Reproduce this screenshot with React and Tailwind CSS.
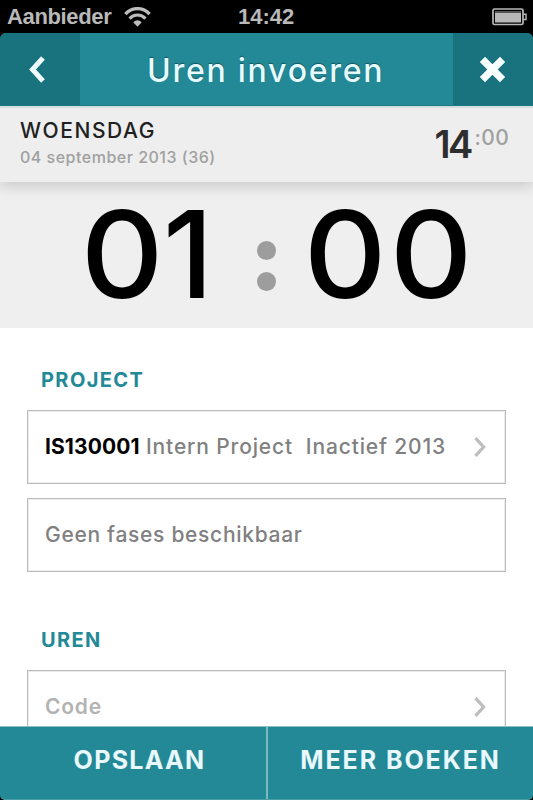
const StatusBar = () => (
  <div className="relative flex h-[33px] items-center justify-between bg-black pl-[7px] pr-[6px] font-['Liberation_Sans',sans-serif] text-[22px] font-bold leading-[33px] text-[#b9b9b9]">
    <div className="flex items-center gap-[13px]">
      <span className="tracking-[-0.35px]">Aanbieder</span>
      <svg width="27" height="20" viewBox="0 0 27 20" fill="none" stroke="#bdbdbd">
        <path d="M1.4 7.2C8 -0.2 19 -0.2 25.6 7.2" strokeWidth="3.4" />
        <path d="M5.6 11.6C10 6.8 17 6.8 21.4 11.6" strokeWidth="3.2" />
        <path d="M9.4 15.4C11.6 12.6 15.4 12.6 17.6 15.4L13.5 19.8Z" fill="#bdbdbd" stroke="none" />
      </svg>
    </div>
    <span className="absolute left-[238px]">14:42</span>
    <svg width="35" height="18" viewBox="0 0 35 18" fill="none">
      <rect x="1" y="1" width="30" height="15.5" rx="1.5" stroke="#b9b9b9" strokeWidth="1.7" />
      <rect x="3" y="3" width="26" height="11.5" fill="#b9b9b9" />
      <rect x="3" y="3" width="26" height="2" fill="#555" />
      <path d="M31.5 6.2H34V11.5H31.5" stroke="#b9b9b9" strokeWidth="1.4" />
    </svg>
  </div>
);

const Header = () => (
  <div className="bg-black">
    <header className="relative z-20 flex h-[73px] overflow-hidden rounded-t-[6px] border-b border-[#1c7782] bg-[#238997] text-[#e6fbff]">
      <button className="flex w-20 items-center bg-[#18737f] pl-[28px]">
        <svg width="18" height="27" viewBox="0 0 18 27" fill="none" stroke="#f0fdff" strokeWidth="5">
          <path d="M15 2L4.5 13.5L15 25" />
        </svg>
      </button>
      <h1 className="flex-1 whitespace-nowrap pl-[67px] text-[32px] font-medium leading-[76px] tracking-[1.75px] [text-shadow:0_-1px_1px_#14555e]">
        Uren invoeren
      </h1>
      <button className="flex w-20 items-center bg-[#18737f] pl-[26px]">
        <svg width="27" height="27" viewBox="0 0 27 27" fill="none" stroke="#f7ffff" strokeWidth="7.4">
          <path d="M3.4 3.4L23.6 23.6M23.6 3.4L3.4 23.6" />
        </svg>
      </button>
    </header>
  </div>
);

const DateRow = () => (
  <div className="relative z-10 flex h-[76px] justify-between border-t-2 border-[#d5dfe0] bg-[#eeeeee] pl-[20px] pr-[24px] shadow-[0_4px_14px_rgba(0,0,0,0.17)]">
    <div className="whitespace-nowrap">
      <div className="mt-[10px] text-[21px] font-medium leading-[26px] tracking-[1.6px] text-[#202020]">WOENSDAG</div>
      <div className="text-[16px] font-medium leading-[26px] tracking-[0.5px] text-[#a0a0a0]">04 september 2013 (36)</div>
    </div>
    <div className="flex items-start">
      <span className="mt-[16px] text-[38px] font-semibold leading-[40px] tracking-[-2.6px] text-[#2e2e2e]">14</span>
      <span className="mt-[17px] pl-[4px] text-[21px] font-medium leading-[26px] tracking-[0.3px] text-[#a0a0a0]">:00</span>
    </div>
  </div>
);

const Clock = () => (
  <div className="flex h-[146px] bg-[#efefef] pl-[81px] text-[121px] font-medium leading-[145px] text-black">
    <span className="flex w-[176px]">
      <span className="w-[82px] shrink-0 text-center"><span className="inline-block scale-x-[1.06]">0</span></span>
      <span className="w-[48px]">1</span>
    </span>
    <span className="flex w-[19px] flex-col items-center gap-[12px] pt-[59px]">
      <span className="size-[19px] rounded-full bg-[#9d9d9d]" />
      <span className="size-[19px] rounded-full bg-[#9d9d9d]" />
    </span>
    <span className="flex pl-[27px]">
      <span className="w-[85px] shrink-0 text-center"><span className="inline-block scale-x-[1.06]">0</span></span>
      <span className="w-[87px] shrink-0 text-center"><span className="inline-block scale-x-[1.06]">0</span></span>
    </span>
  </div>
);

const Chevron = () => (
  <svg width="12" height="20" viewBox="0 0 12 20" fill="none" stroke="#bdbdbd" strokeWidth="3.2">
    <path d="M1.5 1.2L9.6 10L1.5 18.8" />
  </svg>
);

const Field = ({ children, arrow }) => (
  <div className="flex h-[74px] shrink-0 items-center justify-between whitespace-pre border border-[#bbbbbb] bg-white pl-[17px] pr-[19px] text-[21px] font-medium text-[#808080] shadow-[inset_0_0_0_1px_#ececec]">
    <div>{children}</div>
    {arrow && <Chevron />}
  </div>
);

const SectionTitle = ({ children }) => (
  <h2 className="pl-[14px] text-[20px] font-bold leading-[26px] tracking-[1.4px] text-[#238997]">{children}</h2>
);

export default function App() {
  return (
    <div className="flex h-[800px] w-[533px] flex-col overflow-hidden bg-white font-['Inter',sans-serif]">
      <StatusBar />
      <Header />
      <DateRow />
      <Clock />

      <main className="flex min-h-0 flex-1 flex-col overflow-hidden px-[27px] pt-[39px]">
        <SectionTitle>PROJECT</SectionTitle>
        <div className="mt-[17px] flex flex-col gap-[14px]">
          <Field arrow>
            <b className="tracking-[0.1px] text-black">IS130001</b>
            <span className="tracking-[0.85px]"> Intern Project  Inactief 2013</span>
          </Field>
          <Field>
            <span className="tracking-[0.7px]">Geen fases beschikbaar</span>
          </Field>
        </div>
        <div className="mt-[55px]">
          <SectionTitle>UREN</SectionTitle>
        </div>
        <div className="mt-[17px]">
          <Field arrow>
            <span className="font-semibold tracking-[0.8px] text-[#b3b3b3]">Code</span>
          </Field>
        </div>
      </main>

      <div className="bg-black">
        <footer className="flex h-[74px] overflow-hidden rounded-b-[5px] border-b border-t border-b-[#4b9da8] border-t-[#8fbfc5] bg-[#238997] text-[25px] font-bold leading-[66px] text-[#e9f8fc] [text-shadow:0_-1px_1px_#0b3c43]">
          <button className="w-[268px] border-r-2 border-[#7bb9c1] pb-[6px] pl-[13px] tracking-[1.3px]">OPSLAAN</button>
          <button className="flex-1 whitespace-nowrap pb-[6px] tracking-[1.95px]">MEER BOEKEN</button>
        </footer>
      </div>
    </div>
  );
}
